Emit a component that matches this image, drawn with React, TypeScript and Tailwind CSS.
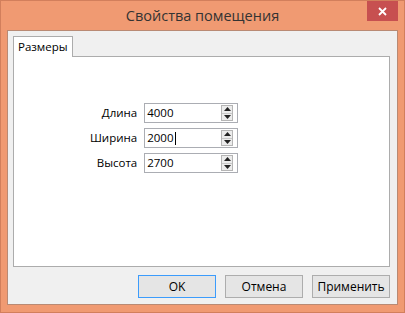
import { useState } from "react";

const font = { fontFamily: '"Segoe UI", "Open Sans", "Noto Sans", sans-serif' };

const fields = [
  { label: "Длина", value: "4000" },
  { label: "Ширина", value: "2000", focused: true },
  { label: "Высота", value: "2700" },
];

function Spinner() {
  return (
    <div className="flex h-[16px] w-[12px] flex-col border border-[#b5b5b5] bg-[#ececec]">
      <div className="flex flex-1 items-center justify-center border-b border-[#c8c8c8]">
        <svg width="7" height="4" viewBox="0 0 7 4">
          <path d="M3.5 0 L7 4 L0 4 Z" fill="#222" />
        </svg>
      </div>
      <div className="flex flex-1 items-center justify-center">
        <svg width="7" height="4" viewBox="0 0 7 4">
          <path d="M0 0 L7 0 L3.5 4 Z" fill="#222" />
        </svg>
      </div>
    </div>
  );
}

function Field({ label, value, focused }: { label: string; value: string; focused?: boolean }) {
  return (
    <>
      <span className="text-right text-[11.5px] leading-none text-black">{label}</span>
      <div className="flex h-[20px] w-[94px] items-center border border-[#abadb3] bg-white pl-[2px] pr-[4px]">
        <span className="flex flex-1 items-center text-[11.5px] leading-none text-black">
          {value}
          {focused && <span className="ml-px inline-block h-[13px] w-px bg-black" />}
        </span>
        <Spinner />
      </div>
    </>
  );
}

export default function App() {
  const [tab] = useState("Размеры");

  return (
    <div
      className="flex h-[313px] w-[405px] flex-col border border-[#d27f5c] bg-[#f09a72]"
      style={font}
    >
      <div className="relative flex h-[29px] shrink-0 items-center justify-center">
        <span className="text-[14.5px] text-[#333333]">Свойства помещения</span>
        <div className="absolute right-[6px] top-0 flex h-[20px] w-[31px] items-center justify-center bg-[#c75050]">
          <svg width="9" height="9" viewBox="0 0 9 9">
            <path d="M1 1 L8 8 M8 1 L1 8" stroke="#fff" strokeWidth="1.8" />
          </svg>
        </div>
      </div>

      <div className="mx-[6px] mb-[7px] flex flex-1 flex-col border border-[#b98a74] bg-[#f0f0f0] px-[5px] pb-[6px] pr-[7px] pt-[5px]">
        <div className="flex">
          <div className="relative -mb-px flex h-[21px] items-center border border-b-0 border-[#acacac] bg-white px-[4px] text-[11.5px] text-black">
            {tab}
          </div>
        </div>
        <div className="h-[211px] border border-[#acacac] bg-white pl-[76px] pt-[46px]">
          <div className="grid grid-cols-[auto_auto] items-center justify-start gap-x-[7px] gap-y-[5px]">
            {fields.map((f) => (
              <Field key={f.label} {...f} />
            ))}
          </div>
        </div>
        <div className="mt-[8px] flex justify-end gap-[9px]">
          {["OK", "Отмена", "Применить"].map((b, i) => (
            <button
              key={b}
              type="button"
              className={`h-[23px] w-[78px] border bg-[#e5e5e5] text-[12px] text-black ${
                i === 0 ? "border-[#3c9cfc]" : "border-[#adadad]"
              }`}
            >
              {b}
            </button>
          ))}
        </div>
      </div>
    </div>
  );
}
